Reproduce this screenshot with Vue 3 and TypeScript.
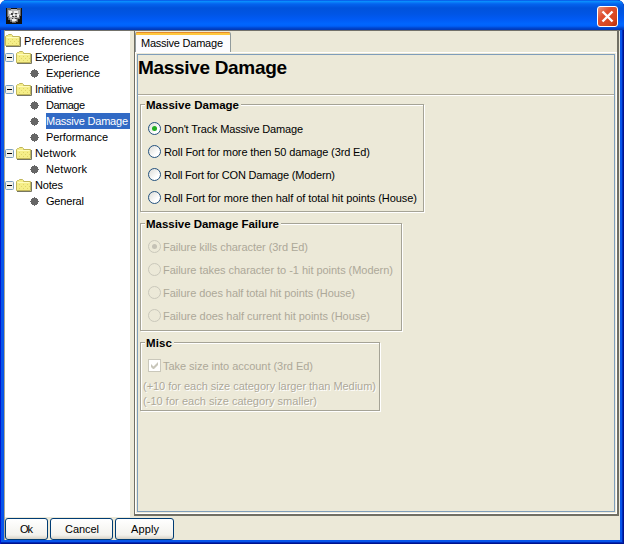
<script setup lang="ts">
import { ref } from 'vue'

interface TreeRow { label: string; kind: 'root' | 'folder' | 'leaf'; width: number }

const tree: TreeRow[] = [
  { label: 'Preferences', kind: 'root', width: 60 },
  { label: 'Experience', kind: 'folder', width: 54 },
  { label: 'Experience', kind: 'leaf', width: 54 },
  { label: 'Initiative', kind: 'folder', width: 38 },
  { label: 'Damage', kind: 'leaf', width: 39 },
  { label: 'Massive Damage', kind: 'leaf', width: 82 },
  { label: 'Performance', kind: 'leaf', width: 62 },
  { label: 'Network', kind: 'folder', width: 41 },
  { label: 'Network', kind: 'leaf', width: 41 },
  { label: 'Notes', kind: 'folder', width: 28 },
  { label: 'General', kind: 'leaf', width: 38 },
]
const current = ref(5)
const tracking = ref(0)
const trackOptions = [
  { label: "Don't Track Massive Damage", width: 139 },
  { label: 'Roll Fort for more then 50 damage (3rd Ed)', width: 206 },
  { label: 'Roll Fort for CON Damage (Modern)', width: 171 },
  { label: 'Roll Fort for more then half of total hit points (House)', width: 253 },
]
const failureOptions = [
  { label: 'Failure kills character (3rd Ed)', width: 145 },
  { label: 'Failure takes character to -1 hit points (Modern)', width: 230 },
  { label: 'Failure does half total hit points (House)', width: 192 },
  { label: 'Failure does half current hit points (House)', width: 207 },
]
const buttons = [
  { label: 'Ok', kind: 'ok', width: 13 },
  { label: 'Cancel', kind: 'cancel', width: 34 },
  { label: 'Apply', kind: 'apply', width: 28 },
]
</script>

<template>
  <div class="window">
    <header class="titlebar">
      <svg class="app-icon" width="16" height="16" viewBox="0 0 16 16">
        <path fill="#101010" d="M0 0h16v16H0z" />
        <path fill="#666" d="M1 0h4v1h6V0h4v8h-1v3h-2v3h-2v1H6v-1H4v-2H2V9H1z" />
        <path fill="#b4b4b4" d="M2 2h3V1h6v1h3v5h-1v3h-2v3H9v1H6v-2H4v-2H3V8H2z" />
        <path fill="#f0f0f0" d="M3 3h3v3H3zM8 3h4v2H8zM4 7h2v2H4zM11 6h2v3h-2zM7 6h2v2H7zM6 11h4v2H6z" />
        <path fill="#444" d="M5 5h2v2H5zM9 5h2v1H9zM6 8h2v1H6zM9 8h2v1H9zM6 10h1v1H6zM9 10h2v1H9z" />
      </svg>
      <button class="close" aria-label="Close">
        <svg width="21" height="21" viewBox="0 0 21 21">
          <path d="M5.5 5.5l10 10M15.5 5.5l-10 10" stroke="#fff" stroke-width="2.4" />
        </svg>
      </button>
    </header>
    <div class="client">
      <div class="split">
        <nav class="tree">
          <div v-for="(row, i) in tree" :key="i" class="row" :class="[row.kind, { selected: i === current }]" @click="current = i">
            <svg v-if="row.kind === 'folder'" class="toggle" width="9" height="9" viewBox="0 0 9 9">
              <rect x=".5" y=".5" width="8" height="8" rx="1" fill="#f4f2ea" stroke="#7b9ebd" />
              <path d="M2 4.5h5" stroke="#000" />
            </svg>
            <svg v-if="row.kind !== 'leaf'" class="folder-icon" width="16" height="13" viewBox="0 0 16 13">
              <path d="M1 12.5h14.5V3" fill="none" stroke="#777762" />
              <path d="M.5 11.5v-9l1-1h1l1-1h3l1 1v1h7v9z" fill="#f5ee88" stroke="#c1b65a" />
              <path d="M1.5 3.5h12" stroke="#fffcbc" />
              <path d="M3 5.5h1m3 0h1m3 0h1M5 7.5h1m3 0h1m3 0h1M3 9.5h1m3 0h1m3 0h1" stroke="#e0d568" />
            </svg>
            <svg v-else class="dot" width="9" height="9" viewBox="0 0 9 9">
              <path d="M4 0h1v1h2v1h1v2h1v1H8v2H7v1H5v1H4V8H2V7H1V5H0V4h1V2h1V1h2z" fill="#666" />
            </svg>
            <span class="label"><svg class="text" :width="row.width" height="14"><text x="0" y="11" :textLength="row.width">{{ row.label }}</text></svg></span>
          </div>
        </nav>
        <main class="pane">
          <div class="tabs">
            <div class="tab"><svg class="text" width="82" height="14"><text x="0" y="11" textLength="82">Massive Damage</text></svg></div>
          </div>
          <div class="page">
            <div class="sheet">
              <h1><svg class="text" width="150" height="24"><text x="0" y="19" textLength="149">Massive Damage</text></svg></h1>
              <div class="groups">
                <section class="group track">
                  <h2><svg class="text" width="93" height="14"><text x="0" y="11" textLength="93">Massive Damage</text></svg></h2>
                  <div v-for="(o, i) in trackOptions" :key="o.label" class="option" @click="tracking = i">
                    <span class="radio" :class="{ on: tracking === i }"></span>
                    <svg class="text" :width="o.width" height="14"><text x="0" y="11" :textLength="o.width">{{ o.label }}</text></svg>
                  </div>
                </section>
                <section class="group failure disabled">
                  <h2><svg class="text" width="133" height="14"><text x="0" y="11" textLength="133">Massive Damage Failure</text></svg></h2>
                  <div v-for="(o, i) in failureOptions" :key="o.label" class="option">
                    <span class="radio" :class="{ on: i === 0 }"></span>
                    <svg class="text" :width="o.width" height="14"><text x="0" y="11" :textLength="o.width">{{ o.label }}</text></svg>
                  </div>
                </section>
                <section class="group misc disabled">
                  <h2><svg class="text" width="26" height="14"><text x="0" y="11" textLength="26">Misc</text></svg></h2>
                  <div class="option">
                    <svg class="check" width="13" height="13" viewBox="0 0 13 13">
                      <rect x=".5" y=".5" width="12" height="12" fill="#fff" stroke="#cac8bb" />
                      <path d="M3 5v3l2 2h1l4-4V3L5.5 7.5z" fill="#c8c6ba" />
                    </svg>
                    <svg class="text" width="151" height="14"><text x="0" y="11" textLength="150">Take size into account (3rd Ed)</text></svg>
                  </div>
                  <p><svg class="text" width="234" height="14"><text x="0" y="11" textLength="233">(+10 for each size category larger than Medium)</text></svg></p>
                  <p><svg class="text" width="176" height="14"><text x="0" y="11" textLength="174">(-10 for each size category smaller)</text></svg></p>
                </section>
              </div>
            </div>
          </div>
        </main>
      </div>
      <footer class="actions">
        <button v-for="b in buttons" :key="b.label" :class="b.kind">
          <svg class="text" :width="b.width" height="14"><text x="0" y="11" :textLength="b.width">{{ b.label }}</text></svg>
        </button>
      </footer>
    </div>
  </div>
</template>

<style>
body { margin: 0; background: #fff; }
</style>

<style scoped>
* { box-sizing: border-box; }
.window {
  width: 624px; height: 544px; display: flex; flex-direction: column;
  padding: 0 4px 4px; border-radius: 7px 7px 0 0; overflow: hidden;
  background: #0755ea; box-shadow: inset 1px 0 #0019cf, inset -1px 0 #00138c, inset 0 -1px #00138c, inset -2px 0 #0029b8, inset 0 -2px #0029b8;
  font: 11px "Liberation Sans", Arial, sans-serif; color: #000;
}
.text { display: block; flex: none; overflow: visible; fill: currentColor; }
.titlebar {
  height: 30px; flex: none; margin: 0 -4px; padding: 2px 6px 0; display: flex; align-items: center; justify-content: space-between;
  background: linear-gradient(#0831d9 0, #0997ff 1px, #0a83fa 2px, #0463ee 4px, #0053dc 8px, #0055e5 14px, #005af4 19px, #0066ff 24px, #0061fa 26px, #0046cf 28px, #0037b5 30px);
}
.close { width: 21px; height: 21px; padding: 0; border: 1px solid #fff; border-radius: 3px; background: linear-gradient(135deg, #e9967c, #e05030 35%, #d7461d 75%, #b12b09); display: flex; align-items: center; justify-content: center; }
.close svg { flex: none; }
.client { height: 510px; display: flex; flex-direction: column; background: #ece9d8; border-top: 1px solid #73726b; border-left: 1px solid #a9a797; }
.split { display: flex; height: 486px; flex: none; }
.tree { width: 125px; background: #fff; padding-top: 1px; flex: none; }
.row { height: 16px; display: flex; align-items: center; }
.row.root { height: 17px; }
.row.folder { padding-left: 0; }
.row.leaf { padding-left: 25px; }
.toggle { flex: none; margin-right: 2px; }
.folder-icon { flex: none; }
.dot { flex: none; margin-right: 7px; }
.label { padding-left: 3px; height: 16px; display: flex; align-items: center; }
.leaf .label { padding-left: 0; }
.selected .label { background: #316ac5; color: #fff; width: 84px; }
.pane { flex: 1; margin-left: 4px; border-left: 1px solid #716f64; border-right: 2px solid #716f64; border-bottom: 2px solid #716f64; height: 485px; margin-right: 1px; display: flex; flex-direction: column; }
.tabs { height: 21px; padding-top: 1px; display: flex; }
.tab { width: 96px; height: 20px; border: 1px solid #919b9c; border-top: 0; border-bottom: 0; border-radius: 2px 2px 0 0; background: linear-gradient(#e68b2c 0 1px, #ffc73c 1px 3px, #fcfcfe 3px); padding: 4px 0 0 5px; }
.page { flex: 1; border: 1px solid #fff; padding: 1px; }
.sheet { height: 100%; border: 1px solid #7f9db9; }
h1 { margin: 0; height: 40px; border-bottom: 1px solid #aca899; box-shadow: 0 1px #fff; font-size: 19px; padding-top: 0; }
.groups { padding: 9px 0 0 2px; display: flex; flex-direction: column; align-items: flex-start; gap: 11px; }
.group { border: 1px solid #a5a396; box-shadow: 1px 1px #fff, inset 1px 1px #fff; padding: 13px 0 0 7px; }
.track { width: 284px; height: 108px; }
.failure { width: 262px; height: 108px; }
.misc { width: 240px; height: 69px; }
h2 { width: fit-content; background: #ece9d8; font-size: 11.5px; margin: -20px 0 5px -3px; padding: 0 2px 0 1px; height: 14px; }
.disabled h2 { margin-bottom: 4px; }
.misc .option { margin-bottom: 2px; }
.option { height: 23px; display: flex; align-items: center; gap: 3px; }
.radio { width: 13px; height: 13px; border: 1px solid #24527f; border-radius: 50%; background: linear-gradient(135deg, #dcdcd7, #fff 70%); display: flex; align-items: center; justify-content: center; }
.radio.on::after { content: ""; width: 5px; height: 5px; border-radius: 50%; background: #22ad22; }
.disabled .option { color: #aca899; gap: 2px; }
.disabled .radio { border-color: #cac8bb; background: none; }
.disabled .radio.on::after { background: #c5c2b6; }
p { margin: 0 0 1px -5px; height: 14px; color: #aca899; text-shadow: 1px 1px #fff; }
.actions { display: flex; gap: 2px; padding-top: 1px; }
.actions button { height: 22px; padding: 0; border: 1px solid #003c74; border-radius: 3px; background: linear-gradient(#fff, #f3f2ed 80%, #d8d2c5); font: inherit; color: #000; display: flex; justify-content: center; align-items: center; }
.ok { width: 43px; }
.cancel { width: 63px; }
.apply { width: 59px; }
</style>
